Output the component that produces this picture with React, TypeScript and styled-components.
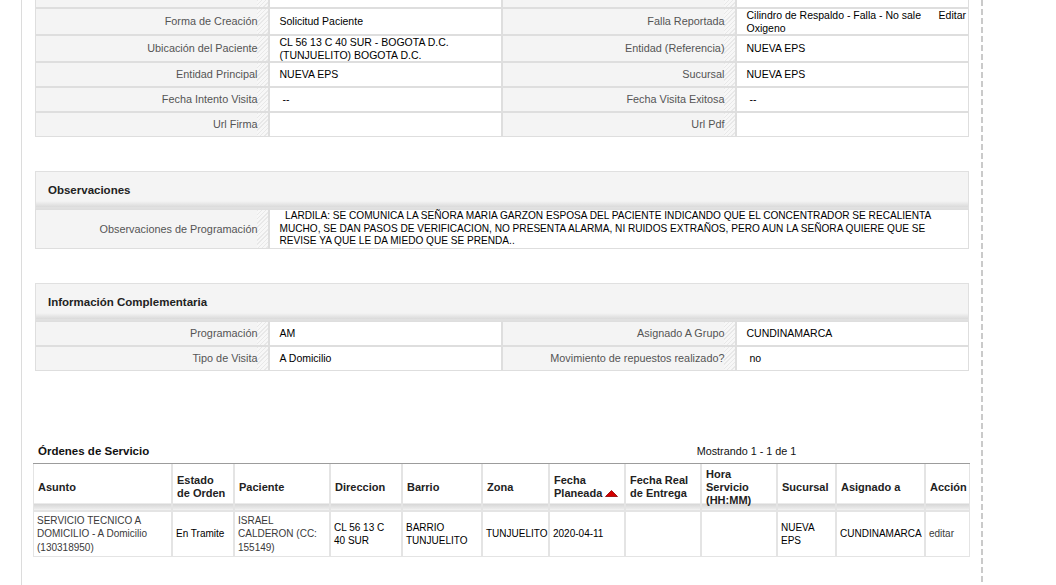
import React from "react";
import styled, { createGlobalStyle } from "styled-components";

const GlobalStyle = createGlobalStyle`
  html, body { margin: 0; padding: 0; background: #fff; }
  body { font-family: "Liberation Sans", Arial, sans-serif; color: #000; }
  *, *::before, *::after { box-sizing: border-box; }
`;

const Page = styled.div`
  display: flex;
  height: 585px;
  overflow: hidden;
  background: #fff;
`;

const Gutter = styled.div`
  width: 21px;
  flex: none;
`;

const Main = styled.main`
  width: 960px;
  flex: none;
  border-left: 1px solid #dcdcdc;
  padding: 0 11px;
`;

const DashedRail = styled.div`
  width: 2px;
  flex: none;
  background: repeating-linear-gradient(to bottom, #cacaca 0 6px, transparent 6px 9px);
`;

const DataTable = styled.table`
  width: 934px;
  margin-left: 2px;
  border-collapse: separate;
  border-spacing: 0;
  table-layout: fixed;
  font-size: 10.5px;
  line-height: 12.4px;
`;

const Section = styled(DataTable)<{ $gap?: number }>`
  margin-top: ${(p) => p.$gap ?? 34}px;
`;

const LabelCell = styled.td<{ $h?: number; $noTop?: boolean }>`
  height: ${(p) => p.$h ?? 25}px;
  border: 1px solid #dedede;
  ${(p) => (p.$noTop ? "border-top: none;" : "")}
  padding: 0 10px;
  text-align: right;
  vertical-align: middle;
  font-size: 10.85px;
  color: #555;
  background:
    repeating-linear-gradient(135deg, #e8e8e8 0 1px, #f7f7f7 1px 3px) right top / 11px 100% no-repeat,
    #f4f4f4;
`;

const ValueCell = styled.td<{ $noTop?: boolean; $lh?: number; $fs?: number }>`
  border: 1px solid #dedede;
  ${(p) => (p.$noTop ? "border-top: none;" : "")}
  padding: 0 10px;
  vertical-align: middle;
  color: #000;
  background: #fff;
  white-space: nowrap;
  ${(p) => (p.$lh ? `line-height: ${p.$lh}px;` : "")}
  ${(p) => (p.$fs ? `font-size: ${p.$fs}px;` : "")}
`;

const EditValue = styled.div`
  display: flex;
  align-items: flex-start;
  justify-content: space-between;
  gap: 8px;
  margin-right: -8px;
  white-space: normal;
`;

const EditLink = styled.span`
  flex: none;
  color: #000;
`;

const SectionHead = styled.th`
  height: 38px;
  border: 1px solid #e0e0e0;
  padding: 0 12px;
  text-align: left;
  vertical-align: middle;
  font-size: 11.5px;
  font-weight: bold;
  color: #222;
  background: linear-gradient(to bottom, #f4f4f4 0, #f4f4f4 calc(100% - 7px), #dadada calc(100% - 1px), #e8e8e8 100%);
`;

const OrdersBar = styled.div`
  display: grid;
  grid-template-columns: 490px 1fr;
  height: 20px;
  margin-top: 72px;
  line-height: 16px;
`;

const OrdersTitle = styled.div`
  padding-left: 5px;
  font-size: 11.5px;
  font-weight: bold;
  color: #111;
`;

const Paging = styled.div`
  text-align: center;
  font-size: 10.8px;
  color: #111;
`;

const OrdersTable = styled.table`
  width: 937px;
  border-collapse: separate;
  border-spacing: 0;
  table-layout: fixed;
  border-top: 1px solid #9c9c9c;
`;

const HeadCell = styled.th`
  height: 47px;
  border: 1px solid #e4e4e4;
  border-top: none;
  padding: 0 4px;
  text-align: left;
  vertical-align: middle;
  white-space: nowrap;
  font-size: 11px;
  line-height: 12.8px;
  font-weight: bold;
  color: #222;
  background: linear-gradient(to bottom, #fff 0, #fff calc(100% - 7px), #d6d6d6 calc(100% - 6px), #ececec calc(100% - 1px), #f4f4f4 100%);
`;

const BodyCell = styled.td<{ $link?: boolean }>`
  height: 46px;
  border: 1px solid #e4e4e4;
  padding: 0 3px;
  vertical-align: middle;
  white-space: nowrap;
  font-size: 10px;
  line-height: 13.3px;
  color: ${(p) => (p.$link ? "#3a3a3a" : "#000")};
`;

const SortArrow = () => (
  <svg width="13" height="7" viewBox="0 0 13 7" style={{ marginLeft: 3, verticalAlign: "0px" }}>
    <polygon points="6.5,0.5 12.5,6.5 0.5,6.5" fill="#d40000" stroke="#8a0000" strokeWidth="0.8" />
  </svg>
);

type Row = [string, React.ReactNode, string, React.ReactNode, number?];

const topRows: Row[] = [
  [
    "Forma de Creación",
    "Solicitud Paciente",
    "Falla Reportada",
    <EditValue>
      <span>Cilindro de Respaldo - Falla - No sale Oxigeno</span>
      <EditLink>Editar</EditLink>
    </EditValue>,
    27,
  ],
  [
    "Ubicación del Paciente",
    <>
      CL 56 13 C 40 SUR - BOGOTA D.C.
      <br />
      (TUNJUELITO) BOGOTA D.C.
    </>,
    "Entidad (Referencia)",
    "NUEVA EPS",
    27,
  ],
  ["Entidad Principal", "NUEVA EPS", "Sucursal", "NUEVA EPS"],
  ["Fecha Intento Visita", "\u00a0--", "Fecha Visita Exitosa", "\u00a0--"],
  ["Url Firma", "", "Url Pdf", ""],
];

const infoRows: Row[] = [
  ["Programación", "AM", "Asignado A Grupo", "CUNDINAMARCA"],
  ["Tipo de Visita", "A Domicilio", "Movimiento de repuestos realizado?", "\u00a0no"],
];

const colWidths = [139, 62, 96, 72, 80, 67, 76, 76, 76, 59, 89, 45];

const FourCols = () => (
  <colgroup>
    <col />
    <col />
    <col />
    <col />
  </colgroup>
);

export default function App() {
  return (
    <>
      <GlobalStyle />
      <Page>
        <Gutter />
        <Main>
          <DataTable>
            <FourCols />
            <tbody>
              <tr>
                <LabelCell $h={8} $noTop />
                <ValueCell $noTop />
                <LabelCell $h={8} $noTop />
                <ValueCell $noTop />
              </tr>
              {topRows.map(([l1, v1, l2, v2, h]) => (
                <tr key={l1}>
                  <LabelCell $h={h}>{l1}</LabelCell>
                  <ValueCell>{v1}</ValueCell>
                  <LabelCell $h={h}>{l2}</LabelCell>
                  <ValueCell>{v2}</ValueCell>
                </tr>
              ))}
            </tbody>
          </DataTable>

          <Section>
            <FourCols />
            <thead>
              <tr>
                <SectionHead colSpan={4}>Observaciones</SectionHead>
              </tr>
            </thead>
            <tbody>
              <tr>
                <LabelCell $h={40}>Observaciones de Programación</LabelCell>
                <ValueCell colSpan={3} $lh={12.7} $fs={10.1}>
                  {"\u00a0\u00a0"}LARDILA: SE COMUNICA LA SEÑORA MARIA GARZON ESPOSA DEL PACIENTE INDICANDO QUE EL CONCENTRADOR SE RECALIENTA
                  <br />
                  MUCHO, SE DAN PASOS DE VERIFICACION, NO PRESENTA ALARMA, NI RUIDOS EXTRAÑOS, PERO AUN LA SEÑORA QUIERE QUE SE
                  <br />
                  REVISE YA QUE LE DA MIEDO QUE SE PRENDA..
                </ValueCell>
              </tr>
            </tbody>
          </Section>

          <Section>
            <FourCols />
            <thead>
              <tr>
                <SectionHead colSpan={4}>Información Complementaria</SectionHead>
              </tr>
            </thead>
            <tbody>
              {infoRows.map(([l1, v1, l2, v2]) => (
                <tr key={l1}>
                  <LabelCell>{l1}</LabelCell>
                  <ValueCell>{v1}</ValueCell>
                  <LabelCell>{l2}</LabelCell>
                  <ValueCell>{v2}</ValueCell>
                </tr>
              ))}
            </tbody>
          </Section>

          <OrdersBar>
            <OrdersTitle>Órdenes de Servicio</OrdersTitle>
            <Paging>Mostrando 1 - 1 de 1</Paging>
          </OrdersBar>

          <OrdersTable>
            <colgroup>
              {colWidths.map((w, i) => (
                <col key={i} style={{ width: w }} />
              ))}
            </colgroup>
            <thead>
              <tr>
                <HeadCell>Asunto</HeadCell>
                <HeadCell>
                  Estado
                  <br />
                  de Orden
                </HeadCell>
                <HeadCell>Paciente</HeadCell>
                <HeadCell>Direccion</HeadCell>
                <HeadCell>Barrio</HeadCell>
                <HeadCell>Zona</HeadCell>
                <HeadCell>
                  Fecha
                  <br />
                  Planeada
                  <SortArrow />
                </HeadCell>
                <HeadCell>
                  Fecha Real
                  <br />
                  de Entrega
                </HeadCell>
                <HeadCell>
                  Hora
                  <br />
                  Servicio
                  <br />
                  (HH:MM)
                </HeadCell>
                <HeadCell>Sucursal</HeadCell>
                <HeadCell>Asignado a</HeadCell>
                <HeadCell>Acción</HeadCell>
              </tr>
            </thead>
            <tbody>
              <tr>
                <BodyCell $link>
                  SERVICIO TECNICO A
                  <br />
                  DOMICILIO - A Domicilio
                  <br />
                  (130318950)
                </BodyCell>
                <BodyCell>En Tramite</BodyCell>
                <BodyCell $link>
                  ISRAEL
                  <br />
                  CALDERON (CC:
                  <br />
                  155149)
                </BodyCell>
                <BodyCell>
                  CL 56 13 C
                  <br />
                  40 SUR
                </BodyCell>
                <BodyCell>
                  BARRIO
                  <br />
                  TUNJUELITO
                </BodyCell>
                <BodyCell>TUNJUELITO</BodyCell>
                <BodyCell>2020-04-11</BodyCell>
                <BodyCell />
                <BodyCell />
                <BodyCell>
                  NUEVA
                  <br />
                  EPS
                </BodyCell>
                <BodyCell>CUNDINAMARCA</BodyCell>
                <BodyCell $link>editar</BodyCell>
              </tr>
            </tbody>
          </OrdersTable>
        </Main>
        <DashedRail />
      </Page>
    </>
  );
}
